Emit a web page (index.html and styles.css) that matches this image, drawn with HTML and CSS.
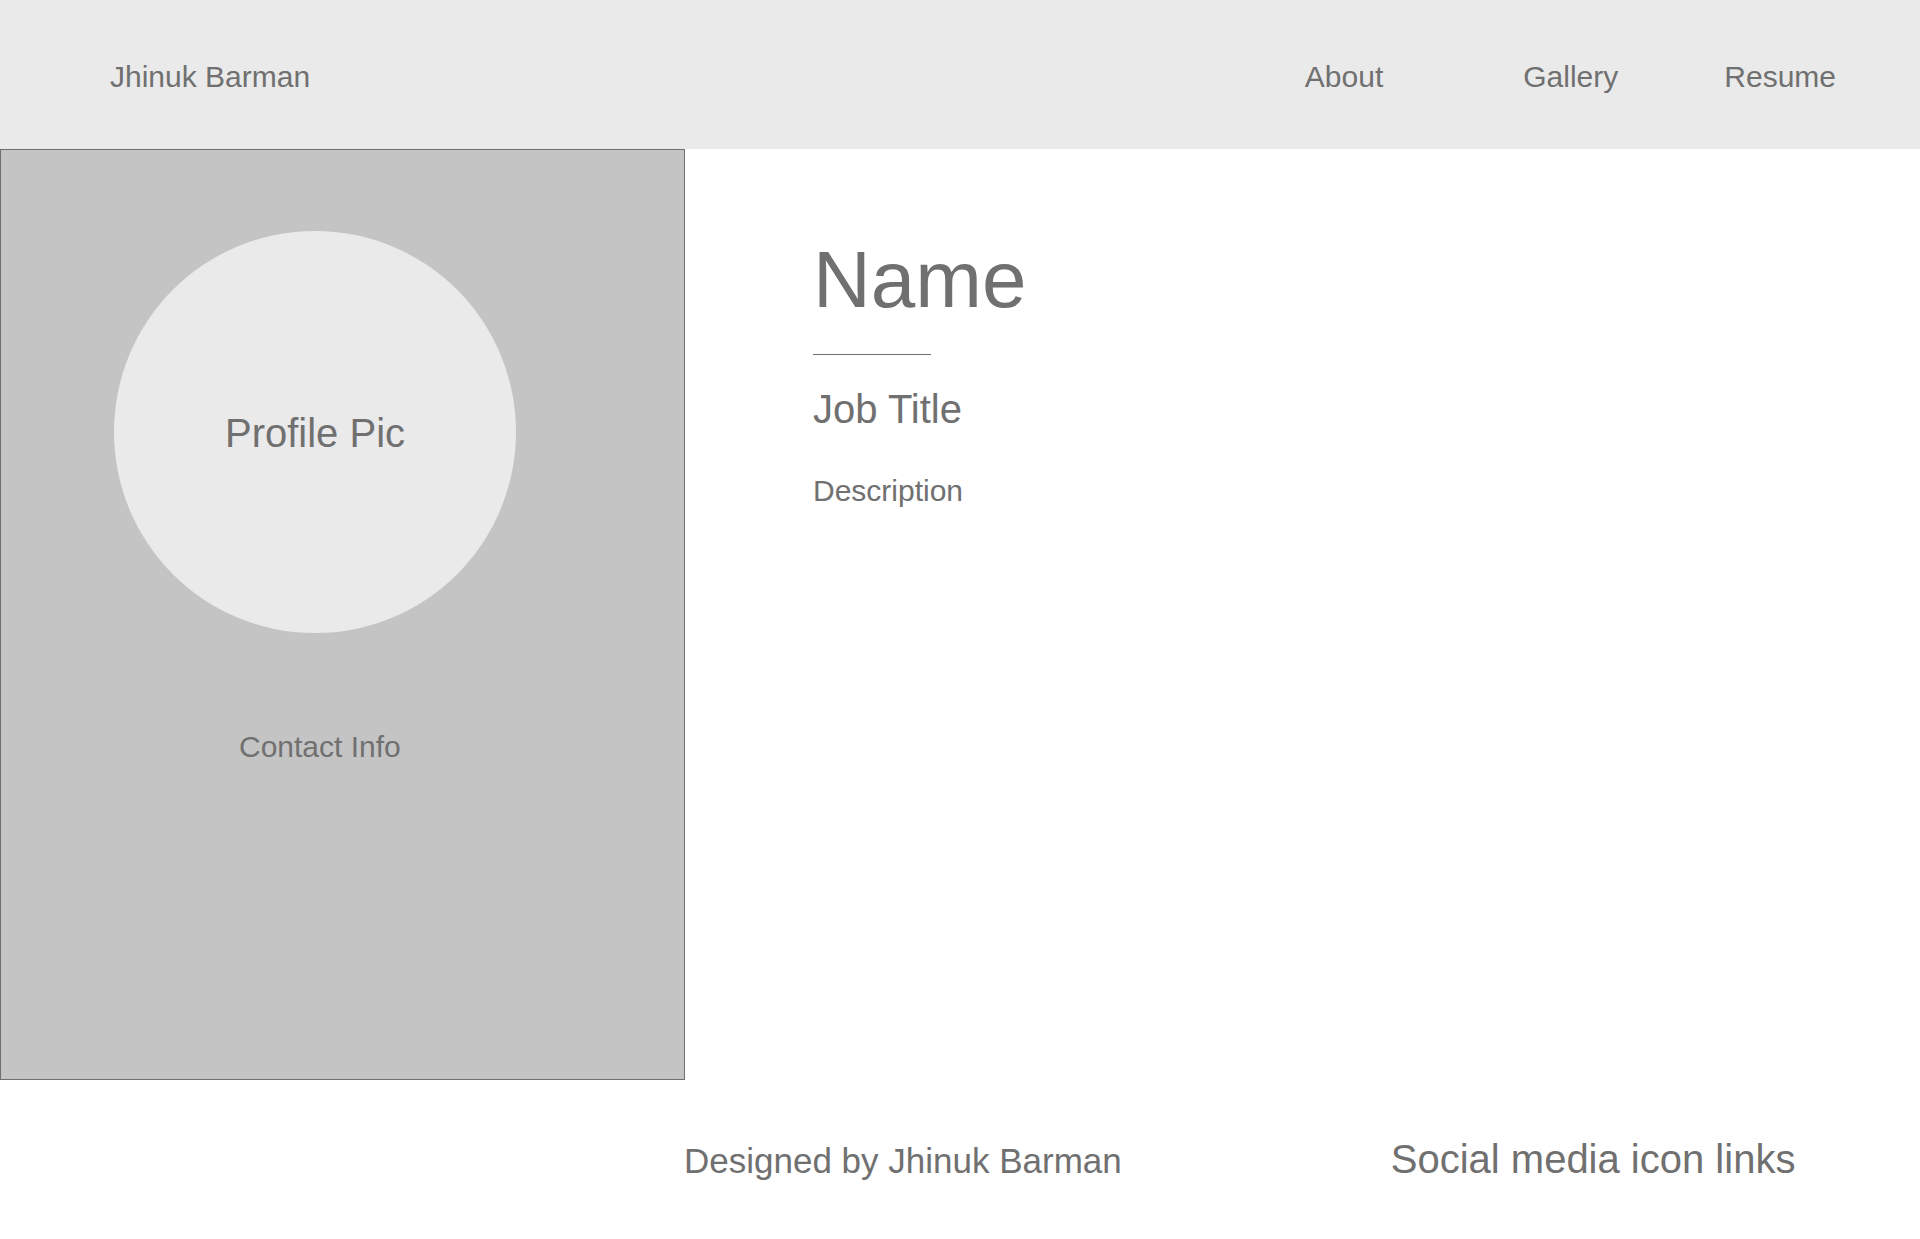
FILE: index.html
```html
<!DOCTYPE html>
<html lang="en">
<head>
<meta charset="utf-8">
<title>Jhinuk Barman</title>
<link rel="stylesheet" href="styles.css">
</head>
<body>
<header class="topbar">
  <div class="brand">Jhinuk Barman</div>
  <nav class="nav">
    <a class="nav-link nav-about" href="#">About</a>
    <a class="nav-link nav-gallery" href="#">Gallery</a>
    <a class="nav-link nav-resume" href="#">Resume</a>
  </nav>
</header>
<main class="main">
  <aside class="sidebar">
    <div class="avatar"><span>Profile Pic</span></div>
    <div class="contact">Contact Info</div>
  </aside>
  <section class="content">
    <h1 class="name">Name</h1>
    <div class="rule"></div>
    <h2 class="job">Job Title</h2>
    <p class="desc">Description</p>
  </section>
</main>
<footer class="footer">
  <div class="credit">Designed by Jhinuk Barman</div>
  <div class="social">Social media icon links</div>
</footer>
</body>
</html>
```
FILE: styles.css
```css
* { box-sizing: border-box; }
html, body { margin: 0; padding: 0; }
body {
  font-family: "Liberation Sans", Arial, Helvetica, sans-serif;
  color: #707070;
  background: #ffffff;
  width: 1920px;
}
.topbar {
  height: 149px;
  background: #eaeaea;
  display: flex;
  align-items: flex-start;
  padding: 62px 84px 0 110px;
}
.brand { font-size: 30px; line-height: 1; }
.nav { margin-left: auto; display: flex; }
.nav-link {
  font-size: 30px;
  line-height: 1;
  color: #707070;
  text-decoration: none;
}
.nav-gallery { margin-left: 140px; }
.nav-resume { margin-left: 106px; }

.main { display: flex; height: 931px; }
.sidebar {
  width: 685px;
  flex: none;
  background: #c4c4c4;
  border: 1px solid #707070;
  display: flex;
  flex-direction: column;
  align-items: flex-start;
}
.avatar {
  width: 402px;
  height: 402px;
  border-radius: 50%;
  background: #eaeaea;
  margin: 81px 0 0 113px;
  padding-top: 2px;
  display: flex;
  align-items: center;
  justify-content: center;
  font-size: 40px;
}
.contact {
  font-size: 30px;
  line-height: 1;
  margin: 99px 0 0 238px;
}
.content { padding: 91px 0 0 128px; }
.name {
  margin: 0;
  font-size: 80px;
  font-weight: normal;
  line-height: 1;
}
.rule {
  width: 118px;
  height: 1px;
  background: #707070;
  margin-top: 34px;
}
.job {
  margin: 34px 0 0;
  font-size: 40px;
  font-weight: normal;
  line-height: 1;
}
.desc {
  margin: 47px 0 0;
  font-size: 30px;
  line-height: 1;
}
.footer {
  height: 159px;
  display: flex;
  align-items: baseline;
  padding: 59px 0 0 684px;
}
.credit { font-size: 35px; line-height: 1; }
.social { font-size: 40px; line-height: 1; margin-left: 269px; }
```
